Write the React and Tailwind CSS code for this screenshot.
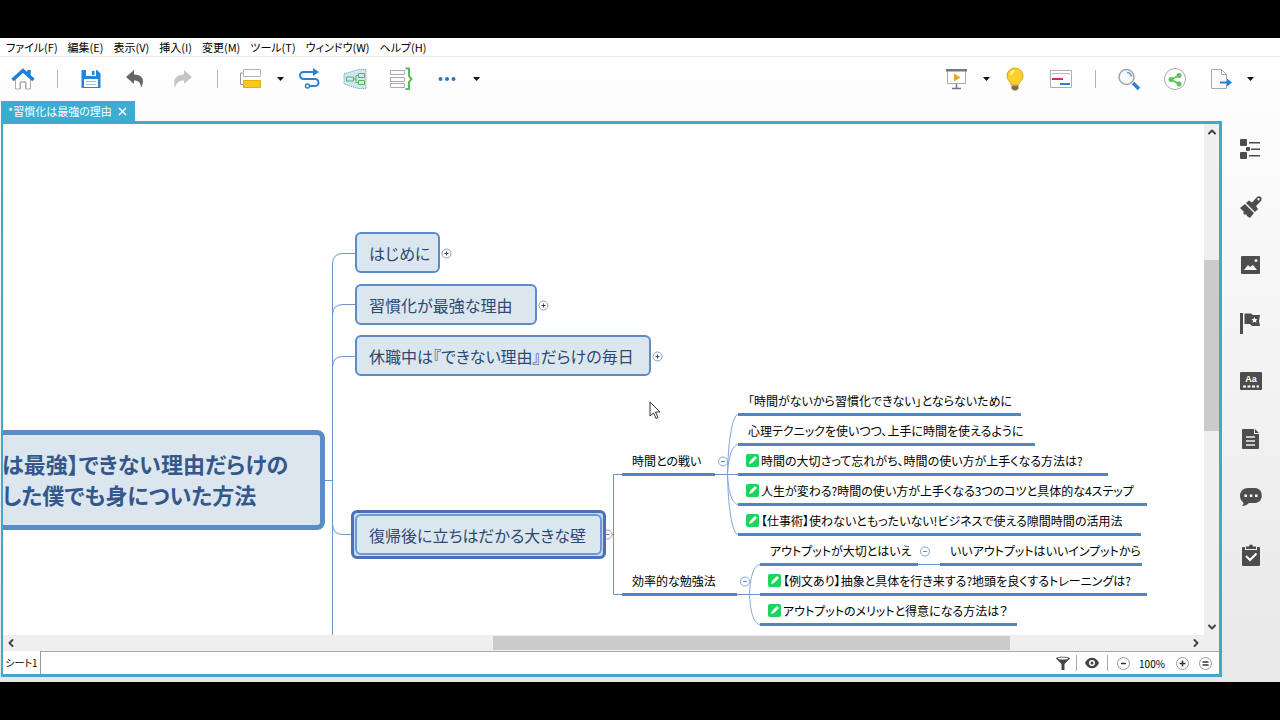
import clsx from 'clsx';
import { ChevronDown, ChevronLeft, ChevronRight, ChevronUp } from 'lucide-react';

const MENUS = ['ファイル(F)', '編集(E)', '表示(V)', '挿入(I)', '変更(M)', 'ツール(T)', 'ウィンドウ(W)', 'ヘルプ(H)'];

// canvas coordinates, origin at the top left of the sheet
const TOPICS = [
  { text: 'はじめに', x: 352, y: 108, w: 85, toggle: 443 },
  { text: '習慣化が最強な理由', x: 352, y: 160, w: 182, toggle: 540 },
  { text: '休職中は『できない理由』だらけの毎日', x: 352, y: 211, w: 296, toggle: 654 },
];

const SUBTOPICS = [
  { text: '時間との戦い', x: 619, y: 327, w: 93 },
  { text: '効率的な勉強法', x: 619, y: 447, w: 115 },
  { text: '「時間がないから習慣化できない」とならないために', x: 735, y: 267, w: 283 },
  { text: '心理テクニックを使いつつ、上手に時間を使えるように', x: 735, y: 297, w: 297 },
  { text: '時間の大切さって忘れがち、時間の使い方が上手くなる方法は?', x: 735, y: 327, w: 370, marker: true },
  { text: '人生が変わる?時間の使い方が上手くなる3つのコツと具体的な4ステップ', x: 735, y: 357, w: 409, marker: true },
  { text: '【仕事術】使わないともったいない!ビジネスで使える隙間時間の活用法', x: 735, y: 387, w: 403, marker: true },
  { text: 'アウトプットが大切とはいえ', x: 757, y: 417, w: 158 },
  { text: 'いいアウトプットはいいインプットから', x: 937, y: 417, w: 202 },
  { text: '【例文あり】抽象と具体を行き来する?地頭を良くするトレーニングは?', x: 757, y: 447, w: 387, marker: true },
  { text: 'アウトプットのメリットと得意になる方法は？', x: 757, y: 477, w: 257, marker: true },
];

export default function App() {
  return (
    <div className="flex h-screen flex-col bg-black py-[38px] font-['Noto_Sans_CJK_JP',sans-serif] text-black [font-feature-settings:'palt']">
      <div className="flex min-h-0 flex-1 flex-col bg-linear-to-b from-white to-[#e8e8e8]">
        <nav className="flex h-[18px] shrink-0 items-center gap-[10px] bg-white px-[6px] text-[11px] leading-[18px]">
          {MENUS.map((m) => (
            <button key={m} className="whitespace-nowrap">{m}</button>
          ))}
        </nav>
        <Toolbar />
        <div className="flex min-h-0 flex-1">
          <main className="flex min-w-0 flex-1 flex-col pb-[5px] pl-px">
            <div className="flex h-5 w-[134px] shrink-0 items-center gap-[6px] bg-[#3aadd1] pl-[7px] text-[11px] text-white">
              <span className="whitespace-nowrap">*習慣化は最強の理由</span>
              <button aria-label="閉じる">
                <svg className="size-[9px]" viewBox="0 0 9 9" stroke="white" strokeWidth="1.5"><path d="M1 1l7 7M8 1l-7 7" /></svg>
              </button>
            </div>
            <div className="flex min-h-0 flex-1 flex-col border-3 border-l-2 border-[#40a9ca] bg-white">
              <div className="flex min-h-0 flex-1">
                <Canvas />
                <div className="flex w-[15px] shrink-0 flex-col items-center bg-[#efefef]">
                  <ChevronUp className="size-4 shrink-0 p-[2px]" strokeWidth={4} color="#444" />
                  <div className="h-[120px] shrink" />
                  <div className="h-[171px] w-full bg-[#cbcbcb]" />
                  <div className="flex-1" />
                  <ChevronDown className="size-4 shrink-0 p-[2px]" strokeWidth={4} color="#444" />
                </div>
              </div>
              <div className="flex h-4 shrink-0 items-center bg-[#efefef] pr-[15px]">
                <ChevronLeft className="size-4 shrink-0 p-[2px]" strokeWidth={4} color="#444" />
                <div className="w-[39.5%]" />
                <div className="h-[14px] w-[43%] bg-[#cbcbcb]" />
                <div className="flex-1" />
                <ChevronRight className="size-4 shrink-0 p-[2px]" strokeWidth={4} color="#444" />
              </div>
              <SheetBar />
            </div>
          </main>
          <Sidebar />
        </div>
      </div>
    </div>
  );
}

function ToolButton({ label, children }) {
  return (
    <button aria-label={label} className="flex w-[46px] items-center justify-center">
      <svg className="size-6" viewBox="0 0 24 24" fill="none">{children}</svg>
    </button>
  );
}

function Caret() {
  return (
    <button aria-label="その他" className="flex w-3 items-center justify-center">
      <svg className="h-1 w-[7px]" viewBox="0 0 7 4"><path d="M0 0h7L3.500 4z" fill="#111" /></svg>
    </button>
  );
}

function Separator() {
  return <div className="flex w-[22px] justify-center"><div className="h-[18px] w-px bg-[#b5b5b5]" /></div>;
}

function Toolbar() {
  return (
    <div className="flex h-[45px] shrink-0 items-center justify-between border-t border-[#ececec] pr-6 pb-px">
      <div className="flex items-center">
        <ToolButton label="ホーム">
          <path d="M4.500 12v10H9v-7h6v7h4.500V12L12 5z" fill="#fff" stroke="#aaa" />
          <path d="M9.500 22v-7h5v7" stroke="#aaa" />
          <path d="M1.500 13L12 3.500 22.500 13M18 3v5" stroke="#2080d8" strokeWidth="3.500" />
        </ToolButton>
        <Separator />
        <ToolButton label="保存">
          <path d="M2.500 3H18l3.500 3.500V21h-19z" fill="#1e88e0" />
          <path d="M7 3h10v6H7z" fill="#fff" />
          <path d="M13 4h2.500v4H13z" fill="#1e88e0" />
          <path d="M5 12h14v8H5z" fill="#fff" />
          <path d="M7 14.500h10M7 17.500h10" stroke="#9cc4e8" />
        </ToolButton>
        <ToolButton label="元に戻す">
          <path d="M1 10l8-7v4.500c7 0 12 4 7 13.500 0-5-2-7.500-7-7.500V17z" fill="#666" />
        </ToolButton>
        <ToolButton label="やり直し">
          <path d="M21 10l-8-7v4.500c-7 0-12 4-9 13.500 1-5 4-7.500 9-7.500V17z" fill="#c6c6c6" />
        </ToolButton>
        <Separator />
        <ToolButton label="トピック">
          <path d="M4 6H1.500v11.500H4" stroke="#999" />
          <path d="M4.500 2.500h17v7h-17z" fill="#fff" stroke="#b5b5b5" />
          <path d="M4.500 13.500h17v7h-17z" fill="#fbc91e" stroke="#e2ac12" />
        </ToolButton>
        <Caret />
        <ToolButton label="関連">
          <path d="M18 5H6.500a3.500 3.500 0 000 7H18a3.500 3.500 0 010 7h-5.500" stroke="#2f80d0" strokeWidth="2" />
          <path d="M16 1l6 4-6 4z" fill="#2f80d0" />
          <circle cx="10.500" cy="19" r="2" stroke="#2f80d0" strokeWidth="1.500" />
        </ToolButton>
        <ToolButton label="囲み">
          <path d="M1 7l14-4.500h8v19h-8L1 17z" fill="#cfe7f5" stroke="#5a9fd0" strokeDasharray="1 1" />
          <path d="M3.500 10h7v4h-7zM15.500 6.500h6v4h-6zM15.500 13.500h6v4h-6zM10.500 12H13M15.500 8.500H13v7h2.500" stroke="#58b45c" />
        </ToolButton>
        <ToolButton label="要約">
          <path d="M1.500 3.500h14v4h-14zM1.500 10.500h14v4h-14zM1.500 16.500h14v4h-14z" stroke="#aaa" />
          <path d="M16.500 1.500H20v7.500l2.500 3L20 15v7h-3.500" stroke="#5cb85c" strokeWidth="2" />
        </ToolButton>
        <ToolButton label="もっと">
          <g fill="#2f75c0">
            <circle cx="5.500" cy="12" r="2" />
            <circle cx="12" cy="12" r="2" />
            <circle cx="18.500" cy="12" r="2" />
          </g>
        </ToolButton>
        <Caret />
      </div>
      <div className="flex items-center">
        <ToolButton label="プレゼンテーション">
          <path d="M2.500 3.500h18v13h-18z" fill="#fff" stroke="#aaa" />
          <path d="M1 2h21v2.500H1z" fill="#777" />
          <path d="M9 6.500l6.500 4-6.500 4z" fill="#f0a030" />
          <path d="M11.500 17v4M7 21.500h9" stroke="#6c7884" strokeWidth="1.500" />
        </ToolButton>
        <Caret />
        <ToolButton label="ブレインストーミング">
          <path d="M12 1a8 8 0 00-8 8c0 4 4 6 4.500 9h7c.5-3 4.500-5 4.500-9a8 8 0 00-8-8z" fill="#fbd02d" stroke="#d9a514" />
          <path d="M8 8c0-2 1-3.500 3-4" stroke="#fff2a8" strokeWidth="2" />
          <path d="M8.500 18.500h7v3l-2 2h-3l-2-2z" fill="#80704a" />
        </ToolButton>
        <ToolButton label="ガントチャート">
          <path d="M1.500 3.500h21v17h-21z" fill="#fff" stroke="#b0b0b0" />
          <path d="M3.500 8V6.500h17V8" stroke="#bbb" />
          <path d="M3 12h11" stroke="#cc3050" strokeWidth="2" />
          <path d="M11 17h10" stroke="#2f80d0" strokeWidth="2" />
        </ToolButton>
        <Separator />
        <ToolButton label="検索">
          <circle cx="9.500" cy="10" r="7.500" fill="#f6fafd" stroke="#a5a5a5" strokeWidth="1.500" />
          <path d="M10 5.500c2.500 0 4 1.500 4.500 4" stroke="#5aa0de" strokeWidth="1.500" />
          <path d="M16 16l6 6" stroke="#2f80d0" strokeWidth="3.500" />
        </ToolButton>
        <ToolButton label="共有">
          <circle cx="12" cy="12" r="10.500" fill="#fff" stroke="#aaa" />
          <path d="M16 8.500L8 12.500l8 4.500" stroke="#5ec05e" strokeWidth="1.500" />
          <g fill="#5ec05e">
            <circle cx="16" cy="8.500" r="2.500" />
            <circle cx="8" cy="12.500" r="2.500" />
            <circle cx="16" cy="17" r="2.500" />
          </g>
        </ToolButton>
        <ToolButton label="エクスポート">
          <path d="M2.500 2.500h10l5 5v14h-15z" fill="#fbfbfb" stroke="#aaa" />
          <path d="M12.500 2.500v5h5" stroke="#aaa" />
          <path d="M11 15.500h8" stroke="#2084dc" strokeWidth="2" />
          <path d="M18 11.500l5 4-5 4z" fill="#2084dc" />
        </ToolButton>
        <Caret />
      </div>
    </div>
  );
}

function Toggle({ x, y, open }) {
  return (
    <g>
      <circle cx={x} cy={y} r="4.500" fill="white" stroke={open ? '#7ea6d8' : '#8c9cb4'} />
      <path d={`M${x - 2} ${y}h4`} stroke={open ? '#5b8cc8' : '#2d4a73'} />
      {!open && <path d={`M${x} ${y - 2}v4`} stroke="#2d4a73" />}
    </g>
  );
}

function Canvas() {
  return (
    <div className="relative min-w-0 flex-1 overflow-hidden bg-white">
      <svg className="absolute top-0 left-0 h-[600px] w-[1300px]" fill="none" stroke="#7095c4">
        <path d="M322 356.500h7.500M352 129.500h-12q-10.500 0-10.500 10.500v460M329.500 191q0-10.500 10.500-10.500h12M329.500 243q0-10.500 10.500-10.500h12M329.500 400q0 10.500 10.500 10.500h12" />
        <path d="M603 410.500h7.500M619 350.500h-8.500v120h8.500M712 350.500h23M734 470.500h23M915 440.500h22" />
        <path
          stroke="#7ea6d8"
          d="M724.500 350C725 320 729 291 735 290.500M724.500 350C725 338 728 321 735 320.500M724.500 350C725 363 728 380 735 380.500M724.500 350C725 381 729 410 735 410.500M746.500 470C747 456 750 441 757 440.500M746.500 470C747 485 750 500 757 500.500"
        />
        {TOPICS.map((t) => <Toggle key={t.text} x={t.toggle + 0.5} y={t.y + 21.5} />)}
        <Toggle x={604.5} y={410.500} open />
        <Toggle x={720} y={337.500} open />
        <Toggle x={742} y={457.500} open />
        <Toggle x={922} y={427.500} open />
      </svg>

      <div className="absolute top-[306px] -left-10 flex h-[100px] w-[362px] flex-col justify-center rounded-lg border-5 border-[#5b8cc8] bg-[#dce6ef] pb-[2px] pl-[34px] text-[22px] leading-[31px] font-bold whitespace-nowrap text-[#35588c]">
        <p>は最強】できない理由だらけの<br />した僕でも身についた方法</p>
      </div>

      {TOPICS.map((t) => (
        <div
          key={t.text}
          className="absolute flex h-[41px] items-center rounded-md border-2 border-[#5b8cc8] bg-[#dce6ef] pl-3 text-[16px] whitespace-nowrap text-[#2d4a73]"
          style={{ left: t.x, top: t.y, width: t.w }}
        >
          {t.text}
        </div>
      ))}
      <div className="absolute top-[386px] left-[348px] flex h-[49px] w-[255px] rounded-md border-3 border-[#4a70b8] bg-[#c9daf0] p-px">
        <div className="flex flex-1 items-center rounded-md border-2 border-[#6d9ad4] bg-[#dce6ef] pl-3 text-[16px] whitespace-nowrap text-[#2d4a73]">
          復帰後に立ちはだかる大きな壁
        </div>
      </div>

      {SUBTOPICS.map((t) => (
        <div
          key={t.text}
          className={clsx('absolute flex h-[25px] items-center gap-[2px] border-b-3 border-[#5585c0] pb-[3px] text-[12px] leading-5 whitespace-nowrap', t.marker ? 'pl-2' : 'pl-[10px]')}
          style={{ left: t.x, top: t.y, width: t.w }}
        >
          {t.marker && (
            <svg className="size-[13px] shrink-0" viewBox="0 0 13 13">
              <rect width="13" height="13" rx="2" fill="#1cd65c" />
              <path d="M3 10l1-3 5-5 2 2-5 5z" fill="#fff" />
            </svg>
          )}
          {t.text}
        </div>
      ))}

      <svg className="absolute top-[277px] left-[646px] h-[19px] w-3" viewBox="0 0 12 19">
        <path d="M1 1v14l3.500-3L7 17.500l2-1L6.500 11H11z" fill="#fff" stroke="#333" />
      </svg>
    </div>
  );
}

function SheetBar() {
  return (
    <div className="flex h-[23px] shrink-0 text-[10px]">
      <button className="w-[38px] border-r border-[#999] text-center whitespace-nowrap">シート1</button>
      <div className="flex flex-1 items-center justify-end border-t border-[#aaa] pr-[7px]">
        <button aria-label="フィルター" className="px-[6px]">
          <svg className="size-[14px]" viewBox="0 0 14 14"><path d="M0 2.500C0 0 14 0 14 2.500L8.500 8v6h-3V8z" fill="#444" /><ellipse cx="7" cy="2.500" rx="5" ry="1" fill="#fff" /></svg>
        </button>
        <div className="h-4 w-px bg-[#aaa]" />
        <button aria-label="表示" className="px-[7px]">
          <svg className="h-3 w-4" viewBox="0 0 14 12"><path d="M0 6C3-1 11-1 14 6 11 13 3 13 0 6z" fill="#444" /><circle cx="7" cy="6" r="3" fill="#fff" /><circle cx="7" cy="6" r="1.500" fill="#444" /></svg>
        </button>
        <div className="mr-[9px] h-4 w-px bg-[#aaa]" />
        <ZoomButton label="縮小" d="M4 6.500h5" />
        <span className="w-[46px] pr-[2px] text-center">100%</span>
        <ZoomButton label="拡大" d="M3.500 6.500h6M6.500 3.500v6" />
        <div className="w-[10px]" />
        <ZoomButton label="実寸" d="M3.500 5h6M3.500 8h6" />
      </div>
    </div>
  );
}

function ZoomButton({ label, d }) {
  return (
    <button aria-label={label}>
      <svg className="size-[13px]" viewBox="0 0 13 13" fill="none">
        <circle cx="6.500" cy="6.500" r="6" stroke="#999" />
        <path d={d} stroke="#333" strokeWidth="1.500" />
      </svg>
    </button>
  );
}

function SideButton({ label, children }) {
  return (
    <button aria-label={label} className="flex h-[58px] shrink-0 items-center justify-center">
      <svg className="size-[22px]" viewBox="0 0 22 22" fill="#4d4d4d">{children}</svg>
    </button>
  );
}

function Sidebar() {
  return (
    <aside className="flex w-[58px] shrink-0 flex-col overflow-hidden pt-[19px]">
      <SideButton label="アウトライン">
        <rect x="0" y="1" width="7" height="7" rx="1" />
        <rect x="0" y="14" width="7" height="7" rx="1" />
        <rect x="6" y="9" width="4" height="4" rx="1" />
        <path d="M9 4h11v1.500H9zM11 10.500h9V12h-9zM9 17h11v1.500H9z" />
      </SideButton>
      <SideButton label="書式">
        <path d="M0 12l5-4 9 9-4 5-3-2-1-2-1 1-2-2 1-1z" />
        <path d="M6 7l3-2.500 3 2L17 1c3-2 6 1 4 4l-5 5 2 3-3 3zM18.500 2a1.200 1.200 0 100 2.400 1.200 1.200 0 000-2.400z" fillRule="evenodd" />
      </SideButton>
      <SideButton label="画像">
        <path fillRule="evenodd" d="M2 2h17a1 1 0 011 1v16a1 1 0 01-1 1H2a1 1 0 01-1-1V3a1 1 0 011-1zM4 16h13l-4-5-3 2-2-2zM16 5a1.500 1.500 0 100 3 1.500 1.500 0 000-3z" />
      </SideButton>
      <SideButton label="マーカー">
        <path d="M0 1h3v21H0zM4.500 1.500H11L13 3h7l-1 6 1 5h-8l-2-2H4.500z" />
        <path d="M14.500 5l1 2 2 .3-1.500 1.500.5 2-2-1-2 1 .5-2L11.500 7.300l2-.3z" fill="#fff" />
      </SideButton>
      <SideButton label="ラベル">
        <rect x="0" y="2" width="22" height="18" rx="1" />
        <path d="M3 16.500h16" stroke="#fff" strokeWidth="2" strokeDasharray="3 1.500" />
        <text x="11" y="12" fill="#fff" fontSize="9" textAnchor="middle" className="font-['Liberation_Sans',sans-serif] font-bold">Aa</text>
      </SideButton>
      <SideButton label="ノート">
        <path d="M3 1h11v5h5v14a1 1 0 01-1 1H3a1 1 0 01-1-1V2a1 1 0 011-1zM15 1l4 4h-4z" />
        <path d="M6 9h9M6 13h9M6 17h9" stroke="#eee" strokeWidth="1.500" />
      </SideButton>
      <SideButton label="コメント">
        <path d="M8 2h7c9 0 9 15 0 15H9c-2 2-4 3-7 3 1-1 2-2 1-4C-2 13-1 2 8 2z" />
        <path d="M4.500 8.500h2.500V11H4.500zM9.800 8.500h2.500V11H9.800zM15 8.500h2.500V11H15z" fill="#fff" />
      </SideButton>
      <SideButton label="タスク">
        <path d="M3 3h2v3h12V3h2a1 1 0 011 1v17a1 1 0 01-1 1H3a1 1 0 01-1-1V4a1 1 0 011-1zM6 2.500h3a2 2 0 014 0h3V5H6z" />
        <path d="M6 12l4 4 6.500-6.500" stroke="#fff" strokeWidth="2" fill="none" />
      </SideButton>
    </aside>
  );
}
